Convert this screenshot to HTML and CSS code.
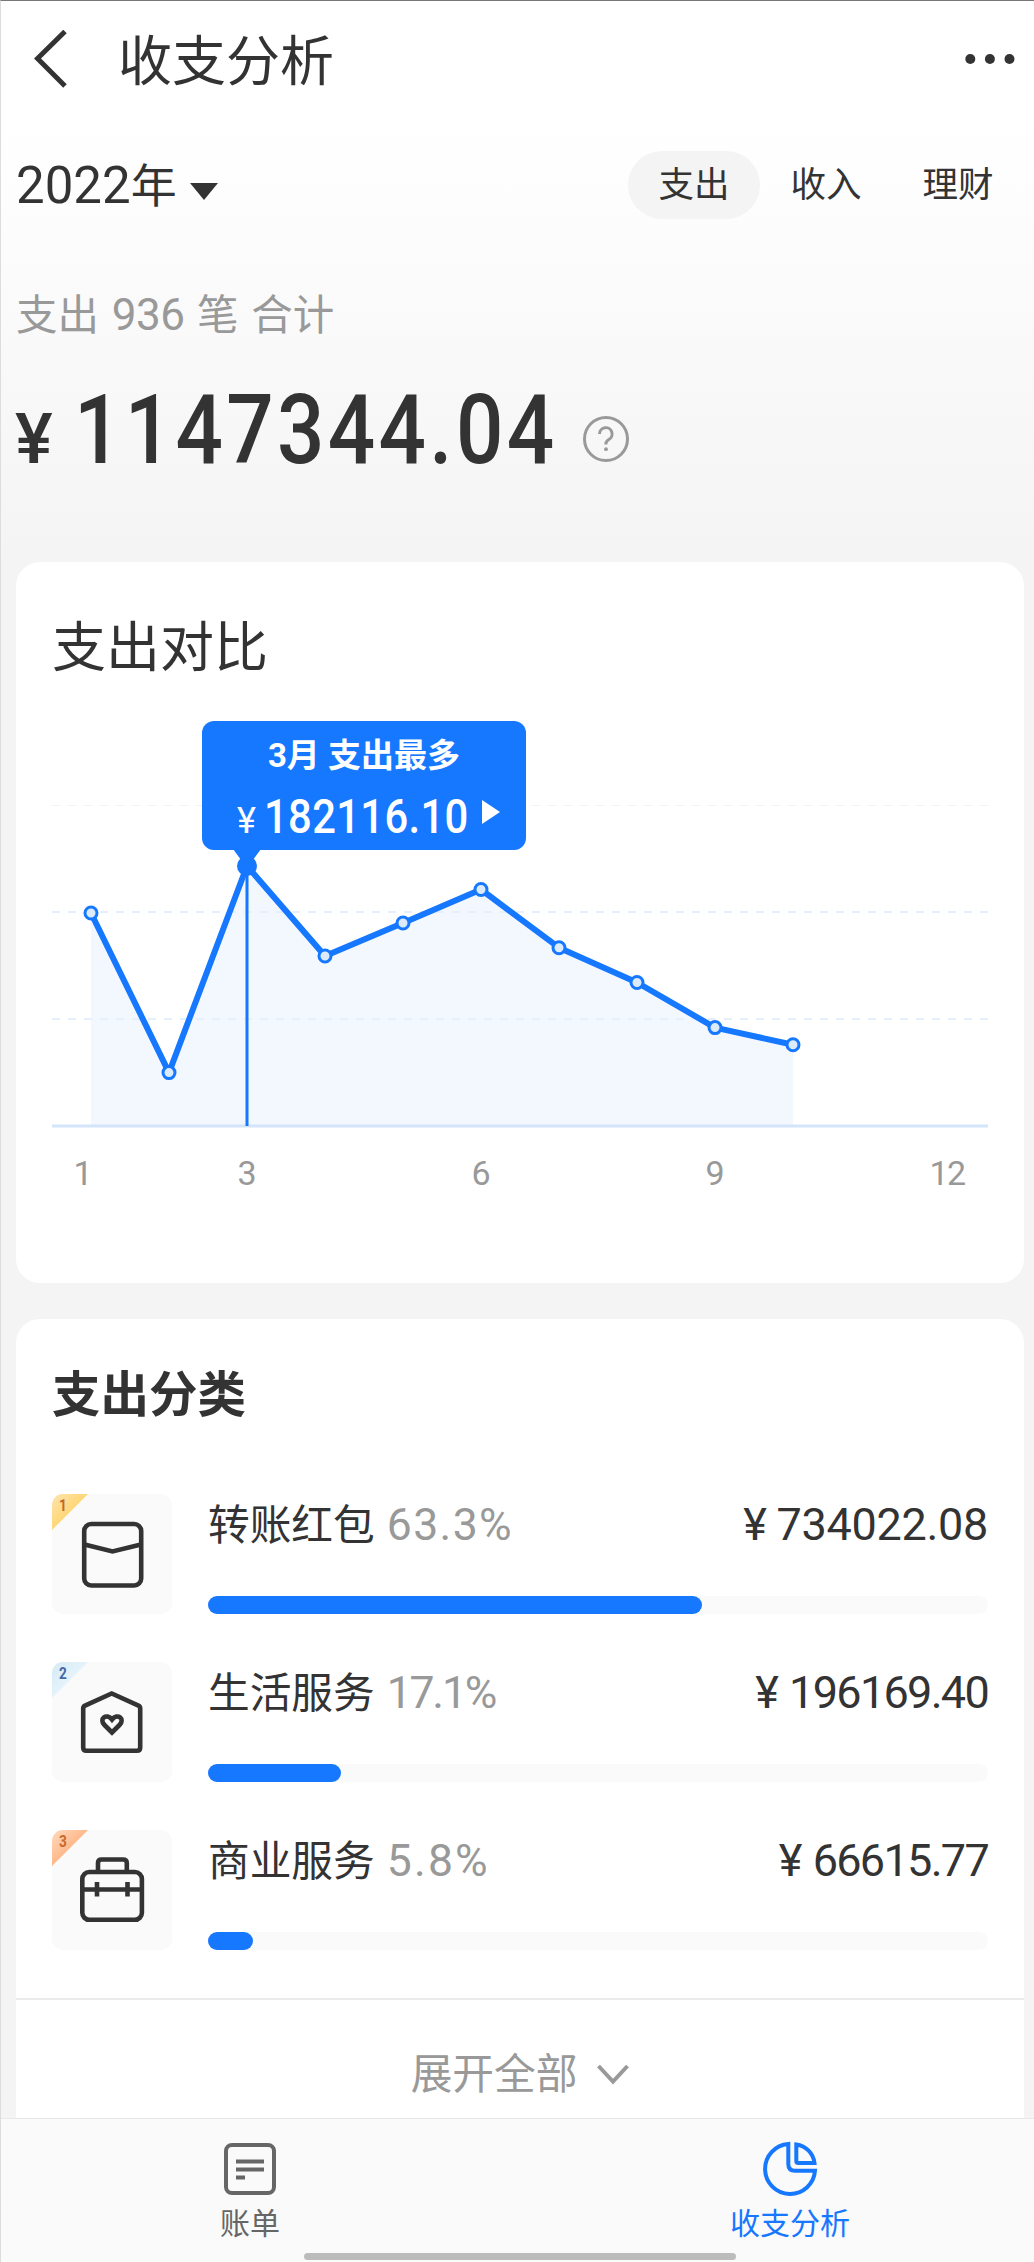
FILE: index.html
```html
<!DOCTYPE html>
<html lang="zh-CN">
<head>
<meta charset="utf-8">
<title>收支分析</title>
<link rel="stylesheet" href="styles.css">
</head>
<body>
<div class="app">
  <header class="topbar">
    <svg class="back" width="36" height="58" viewBox="0 0 36 58"><path d="M31 1.500L3.500 28.500L31 56" fill="none" stroke="#333" stroke-width="5"/></svg>
    <h1 class="title">收支分析</h1>
    <svg class="more" width="50" height="12" viewBox="0 0 50 12"><circle cx="5.300" cy="6" r="5"/><circle cx="24.900" cy="6" r="5"/><circle cx="44.500" cy="6" r="5"/></svg>
  </header>

  <section class="filters">
    <div class="year"><span class="num">2022</span>年<i class="caret"></i></div>
    <nav class="tabs"><span class="tab active">支出</span><span class="tab">收入</span><span class="tab">理财</span></nav>
  </section>

  <section class="summary">
    <p class="count">支出 <span class="num">936</span> 笔 合计</p>
    <div class="total">
      <span class="yen">¥</span><span class="sum">1147344.04</span>
      <svg class="help" width="48" height="48" viewBox="0 0 48 48" fill="none" stroke="#999" stroke-width="3"><circle cx="24" cy="24" r="21.500"/><path d="M17.500 19a6.300 6.300 0 1 1 9.300 5.500c-2.200 1.300-3 2.300-3 5"/><circle cx="24" cy="34.200" r="1.900" fill="#999" stroke="none"/></svg>
    </div>
  </section>

  <section class="card compare">
    <h2>支出对比</h2>
    <div class="chart">
      <svg class="plot" width="936" height="480" viewBox="52 720 936 480">
        <path d="M91 1126V913L169 1072.600L247 866L325 956L403 923L481 889.500L559 947.700L637 982.500L715 1027.600L793 1044.800V1126Z" fill="#f3f8fe"/>
        <g stroke="#e6effc" stroke-width="2" stroke-dasharray="8 8"><path d="M52 805.500H988" stroke="#ebf4f8" stroke-width="1"/><path d="M52 912H988"/><path d="M52 1019H988"/></g>
        <path d="M52 1126H988" stroke="#d3e4fb" stroke-width="3"/>
        <path d="M247 866V1126" stroke="#1677ff" stroke-width="3"/>
        <path d="M91 913L169 1072.600L247 866L325 956L403 923L481 889.500L559 947.700L637 982.500L715 1027.600L793 1044.800" fill="none" stroke="#1677ff" stroke-width="6" stroke-linejoin="round"/>
        <g fill="#dcebfa" stroke="#1677ff" stroke-width="3"><circle cx="91" cy="913" r="6"/><circle cx="169" cy="1072.600" r="6"/><circle cx="325" cy="956" r="6"/><circle cx="403" cy="923" r="6"/><circle cx="481" cy="889.500" r="6"/><circle cx="559" cy="947.700" r="6"/><circle cx="637" cy="982.500" r="6"/><circle cx="715" cy="1027.600" r="6"/><circle cx="793" cy="1044.800" r="6"/></g>
        <path d="M233 849H261L247 868Z" fill="#1677ff"/>
        <circle cx="247" cy="866" r="10" fill="#1677ff"/>
        <g class="axis"><text x="83" y="1185">1</text><text x="247" y="1185">3</text><text x="481" y="1185">6</text><text x="715" y="1185">9</text><text class="twelve" x="947" y="1185">12</text></g>
      </svg>
      <div class="tooltip">
        <div class="tip-title">3月 支出最多</div>
        <div class="tip-sum"><span class="tip-yen">¥</span><span class="tip-num">182116.10</span><i class="play"></i></div>
      </div>
    </div>
  </section>

  <section class="card categories">
    <h2>支出分类</h2>
    <ul class="list">
      <li class="row">
        <div class="icon"><span class="rank gold"><b>1</b></span>
          <svg width="120" height="120" viewBox="0 0 120 120"><rect x="32.200" y="30" width="57" height="61.500" rx="7"/><path d="M32.500 50.500L60.500 57.500L89 50.500"/></svg></div>
        <div class="info"><div class="line"><span class="name">转账红包</span><span class="pct">63.3%</span><span class="amount"><i>¥</i>734022.08</span></div><div class="bar"><div class="fill" style="width:63.3%"></div></div></div>
      </li>
      <li class="row">
        <div class="icon"><span class="rank silver"><b>2</b></span>
          <svg width="120" height="120" viewBox="0 0 120 120"><path d="M31.200 46.500Q31.200 44.500 33 43.700L59.700 31.500L86.500 43.700Q88.200 44.500 88.200 46.500V85.500Q88.200 88.700 85 88.700H34.400Q31.200 88.700 31.200 85.500Z"/><path d="M60 70.500L52.500 63C46.500 57 54.500 50.500 60 57.500C65.500 50.500 73.500 57 67.500 63Z"/></svg></div>
        <div class="info"><div class="line"><span class="name">生活服务</span><span class="pct tight">17.1%</span><span class="amount tight"><i>¥</i>196169.40</span></div><div class="bar"><div class="fill" style="width:17.1%"></div></div></div>
      </li>
      <li class="row">
        <div class="icon"><span class="rank bronze"><b>3</b></span>
          <svg width="120" height="120" viewBox="0 0 120 120"><rect x="30.300" y="42" width="59.600" height="47.800" rx="7"/><path d="M46 41V33Q46 29.500 49.500 29.500H71Q74.800 29.500 74.800 33V41M31 59.500H89M45 52V66.500M75.500 52V66.500"/></svg></div>
        <div class="info"><div class="line"><span class="name">商业服务</span><span class="pct wide">5.8%</span><span class="amount tight"><i>¥</i>66615.77</span></div><div class="bar"><div class="fill" style="width:5.8%"></div></div></div>
      </li>
    </ul>
    <div class="expand"><span>展开全部</span><svg width="32" height="24" viewBox="0 0 32 24"><path d="M1.500 3L16 18.500L30.500 3" fill="none" stroke="#999" stroke-width="4"/></svg></div>
  </section>

  <footer class="bottom">
    <div class="item">
      <svg width="56" height="56" viewBox="0 0 56 56" fill="none" stroke="#666" stroke-width="4"><rect x="4" y="4" width="48" height="48" rx="6"/><path d="M14 20.500H42M14 28.500H42M14 36.500H23"/></svg>
      <span>账单</span>
    </div>
    <div class="item on">
      <svg width="56" height="56" viewBox="0 0 56 56" fill="none" stroke="#1677ff" stroke-width="4"><path d="M26.300 3A25 25 0 1 0 53 29.700H33Q26.300 29.700 26.300 23ZM34.300 3.500V20Q34.300 22 36.300 22H52.500A21 21 0 0 0 34.300 3.500Z"/></svg>
      <span>收支分析</span>
    </div>
    <i class="home"></i>
  </footer>
</div>
</body>
</html>
```
FILE: styles.css
```css
* { box-sizing: border-box; margin: 0; padding: 0; }
body {
  width: 1034px;
  height: 2262px;
  overflow: hidden;
  background: #f4f4f4;
  color: #333;
  font-family: Roboto, "Noto Sans CJK SC", sans-serif;
}
i { font-style: normal; }
svg { display: block; flex: none; }
.app {
  height: 2262px;
  display: flex;
  flex-direction: column;
  border-top: 1px solid #777;
  border-left: 1px solid #ddd;
  background: linear-gradient(#fff 0, #fff 120px, #f4f4f4 560px, #f4f4f4 100%);
}
.topbar { height: 120px; display: flex; align-items: center; padding: 0 19px 0 33px; }
.back { margin-top: -5px; }
.title { margin: 3px 0 0 48px; font-size: 54px; line-height: 60px; font-weight: 400; flex: 1; }
.more { fill: #333; margin-top: -5px; }
.filters { height: 128px; display: flex; align-items: center; justify-content: space-between; padding: 0 10px 0 15px; }
.year { display: flex; align-items: center; font-size: 46px; line-height: 60px; padding-top: 2px; }
.year .num { font-size: 51px; }
.caret { margin: 10px 0 0 13px; border: 14px solid transparent; border-top: 17px solid #333; border-bottom: 0; }
.tabs { display: flex; }
.tab { width: 132px; height: 68px; border-radius: 34px; text-align: center; font-size: 35.500px; line-height: 68px; }
.tab.active { background: #f4f4f4; }
.summary { height: 313px; padding: 36px 15px 0; }
.count { color: #999; font-size: 41.500px; line-height: 60px; word-spacing: 2.400px; }
.count .num { font-size: 44px; letter-spacing: -.5px; }
.total { display: flex; align-items: baseline; height: 110px; margin-top: 29px; line-height: 110px; font-weight: 500; }
.yen { font-size: 71px; width: 59px; margin-left: -1px; }
.sum { font-size: 97px; letter-spacing: 3.900px; width: 508px; transform: scaleX(.86); transform-origin: left; white-space: nowrap; }
.help { align-self: center; margin-top: 18px; }
.card { margin: 0 10px 0 15px; background: #fff; border-radius: 24px; padding: 0 36px; }
.compare { height: 721px; }
.compare h2 { padding-top: 55px; font-size: 54px; line-height: 64px; font-weight: 400; }
.chart { position: relative; margin-top: 39px; height: 480px; }
.axis { fill: #999; font-size: 34px; text-anchor: middle; }
.twelve { letter-spacing: -1.500px; }
.tooltip { position: absolute; left: 150px; top: 1px; width: 324px; height: 129px; border-radius: 12px; background: #1677ff; color: #fff; padding-top: 11px; }
.tip-title { text-align: center; font-size: 33px; line-height: 47px; font-weight: 700; }
.tip-sum { display: flex; align-items: baseline; margin-top: 8px; padding-left: 35px; font-size: 48px; line-height: 60px; font-weight: 500; }
.tip-yen { font-size: 36px; font-weight: 400; width: 27px; }
.tip-num { letter-spacing: .400px; width: 203px; transform: scaleX(.87); transform-origin: left; white-space: nowrap; }
.play { align-self: center; margin: -14px 0 0 15px; border: 12px solid transparent; border-left: 18px solid #fff; border-right: 0; }
.categories { margin-top: 36px; height: 799px; border-radius: 24px 24px 0 0; }
.categories h2 { padding-top: 48px; font-size: 48.500px; line-height: 58px; font-weight: 700; }
.list { list-style: none; padding-top: 69px; display: flex; flex-direction: column; gap: 48px; }
.row { display: flex; gap: 36px; height: 120px; }
.icon { position: relative; width: 120px; height: 120px; border-radius: 11px; background: #fafafa; overflow: hidden; }
.icon svg { fill: none; stroke: #333; stroke-width: 4.600; }
.rank { position: absolute; left: 0; top: 0; width: 36px; height: 36px; clip-path: polygon(0 0, 100% 0, 0 100%); font-size: 17px; line-height: 23px; padding-left: 7px; }
.rank b { display: block; transform: scaleX(.8); transform-origin: left; }
.gold { background: linear-gradient(135deg, #fce5b0, #ffd777 50%); color: #c0692f; }
.silver { background: linear-gradient(135deg, #d5ebf5, #e5f3fb 50%); color: #4568a5; }
.bronze { background: linear-gradient(135deg, #fddbc0, #ffb98b 50%); color: #c96a2b; }
.info { flex: 1; display: flex; flex-direction: column; justify-content: space-between; }
.line { display: flex; align-items: baseline; height: 60px; line-height: 62px; font-size: 41.700px; }
.pct { margin-left: 12px; color: #999; font-size: 44.500px; letter-spacing: 1.400px; }
.pct.tight { letter-spacing: -2.200px; }
.pct.wide { letter-spacing: 2.200px; }
.amount { margin-left: auto; font-size: 45px; letter-spacing: -.3px; }
.amount i { margin-right: 10px; }
.amount.tight { letter-spacing: -1.700px; }
.amount.tight i { margin-right: 12px; }
.bar { height: 18px; border-radius: 9px; background: #fafafa; }
.fill { height: 18px; border-radius: 9px; background: #1677ff; }
.expand { margin: 48px -36px 0; border-top: 2px solid #ebebeb; height: 120px; padding-top: 30px; display: flex; justify-content: center; align-items: center; gap: 20px; color: #999; font-size: 41.700px; }
.expand span { margin-top: -6px; }
.expand svg { margin-top: 2px; }
.bottom { position: relative; height: 144px; border-top: 1px solid #e8e8e8; background: #fafafa; display: flex; justify-content: space-between; padding: 22px 156px 0 161px; }
.item { width: 176px; display: flex; flex-direction: column; align-items: center; font-size: 30px; line-height: 36px; color: #666; gap: 9px; white-space: nowrap; }
.item.on { color: #1677ff; }
.home { position: absolute; left: 303px; bottom: 2px; width: 432px; height: 7px; border-radius: 4px; background: #bcbcbc; }
```
